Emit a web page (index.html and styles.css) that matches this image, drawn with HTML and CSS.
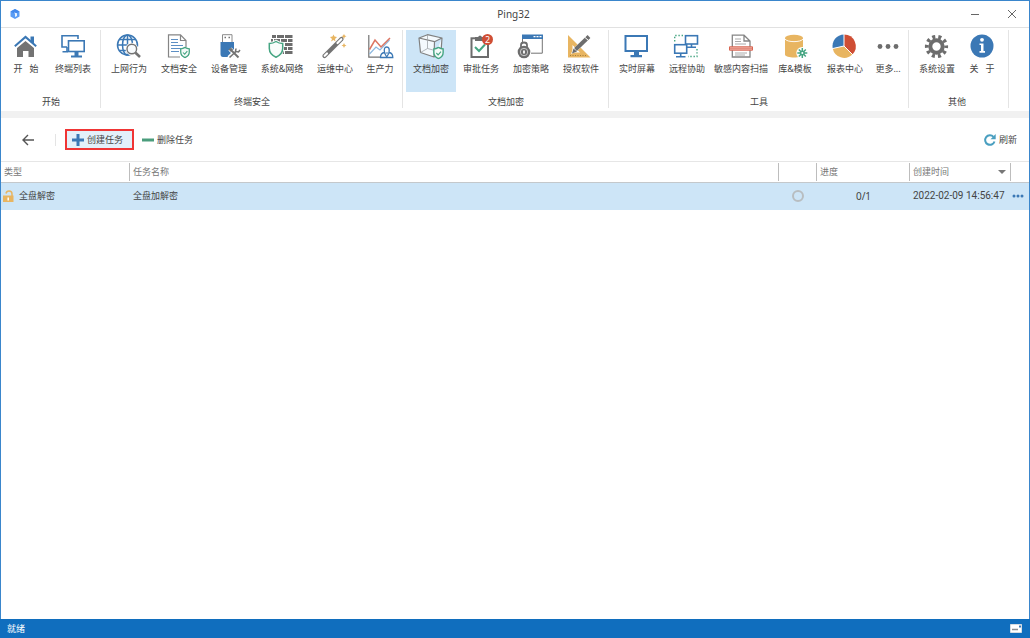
FILE: index.html
```html
<!DOCTYPE html>
<html lang="zh-CN">
<head>
<meta charset="utf-8">
<title>Ping32</title>
<link rel="stylesheet" href="styles.css">
</head>
<body>
<svg class="defs" aria-hidden="true">
  <symbol id="shield" viewBox="0 0 12 14"><path d="M6 1Q8.500 2.600 11 2.700V6.500Q11 11 6 13Q1 11 1 6.500V2.700Q3.500 2.600 6 1Z" fill="#f4faf8" stroke="#45a582" stroke-width="1.500"/><path d="M3.700 7L5.600 9L8.700 5.500" fill="none" stroke="#45a582" stroke-width="1.200"/></symbol>
</svg>
<div class="window">
  <header class="titlebar">
    <svg class="logo" viewBox="0 0 10 10"><path d="M5 0L9.500 2.500V7.500L5 10L.5 7.500V2.500Z" fill="#5b9df5"/><path d="M5 0L9.500 2.500L5 5L.5 2.500Z" fill="#4389ec"/><path d="M4 3.500L7 4.200V7L5 8V5Z" fill="#e8f3ff"/></svg>
    <h1 class="title">Ping32</h1>
    <div class="window-buttons">
      <button class="window-button" aria-label="最小化"><svg viewBox="0 0 10 10"><path d="M1 5.500H9"/></svg></button>
      <button class="window-button" aria-label="关闭"><svg viewBox="0 0 10 10"><path d="M1 1L9 9M9 1L1 9"/></svg></button>
    </div>
  </header>

  <nav class="ribbon">
    <section class="group">
      <div class="items">
        <button class="item item-small">
          <svg class="icon" viewBox="0 0 24 24"><path d="M3 14L11.500 7L20 14V23H14.500V17H9V23H3Z" fill="#737373"/><path d="M1 13L11.500 4L22 13" fill="none" stroke="#fff" stroke-width="3.400"/><path d="M16.500 2.500H20V11L16.500 8Z" fill="#3b78b5"/><path d="M.8 12.300L11.500 2.900L22.200 12.300" fill="none" stroke="#3b78b5" stroke-width="2"/></svg>
          <span>开&nbsp;&nbsp;&nbsp;始</span>
        </button>
        <button class="item">
          <svg class="icon" viewBox="0 0 24 24"><g fill="none" stroke="#3b78b5" stroke-width="1.600"><path d="M6 13H1V1.800H17V5"/><path d="M6 13V17.500M1.500 17.800H7"/><rect x="7.500" y="6.800" width="15.700" height="10.700"/><path d="M10 22.500H21" stroke-width="2"/></g><path d="M13.500 17H17.500V22H13.500Z" fill="#3b78b5"/></svg>
          <span>终端列表</span>
        </button>
      </div>
      <h2 class="group-name">开始</h2>
    </section>

    <section class="group">
      <div class="items">
        <button class="item">
          <svg class="icon" viewBox="0 0 24 24"><g fill="none" stroke="#3b78b5" stroke-width="1.500"><circle cx="10.500" cy="11" r="10"/><ellipse cx="10.500" cy="11" rx="5" ry="10"/><path d="M10.500 1V21M.5 11H20.500M2 5.500H19M2 16.500H19"/></g><path d="M18.500 19L23 23.500" stroke="#fff" stroke-width="4"/><circle cx="14.800" cy="15" r="6.300" fill="#fff"/><circle cx="14.800" cy="15" r="4.800" fill="#f8fbfd" stroke="#737373" stroke-width="1.400"/><path d="M18.500 18.700L23 23" stroke="#737373" stroke-width="2.600"/></svg>
          <span>上网行为</span>
        </button>
        <button class="item">
          <svg class="icon" viewBox="0 0 24 24"><path d="M13 23H1.500V.8H13.500L19 6.500V13M13.500 1V6.500H19" fill="none" stroke="#858585" stroke-width="1.200"/><path d="M4 5.500H11M4 8.500H11M4 11.500H16M4 14.500H14M4 17.500H12" stroke="#5d8fc4" stroke-width="1"/><use href="#shield" x="12.500" y="12.500" width="11" height="12"/></svg>
          <span>文档安全</span>
        </button>
        <button class="item">
          <svg class="icon" viewBox="0 0 24 24"><path d="M5.500 8V.7H15V8" fill="#fff" stroke="#8a8a8a"/><path d="M7.500 3.500H9M11.500 3.500H13" stroke="#737373" stroke-width="1.600"/><path d="M3.500 8H17V23H6Q3.500 23 3.500 20Z" fill="#3b78b5"/><path d="M13 15L22 24M21.500 15L12 24" stroke="#fff" stroke-width="4.500"/><path d="M14 16L21.500 23.500" stroke="#737373" stroke-width="2"/><path d="M12.500 23.500L19.500 17" stroke="#737373" stroke-width="1.600"/><path d="M11.500 15.500L14 13.800L16 15.500L14 18Z" fill="#737373"/><path d="M19 14.500L18.500 17.500L21.500 18L23 16" fill="none" stroke="#737373" stroke-width="1.500"/></svg>
          <span>设备管理</span>
        </button>
        <button class="item item-large">
          <svg class="icon" viewBox="0 0 24 24"><path d="M2 2.500H6M7 2.500H14M15 2.500H22.500M1 6.500H3M4 6.500H10M11 6.500H17M18 6.500H22.500M7 10.500H14M15 10.500H22.500M11 14.500H17M18 14.500H22.500M11 18.500H14M15 18.500H22.500" stroke="#6d6d6d" stroke-width="3"/><path d="M6 5.500Q9 8 14 8V16Q13 22 6 24.500Q-1 22-2 16V8Q3 8 6 5.500Z" fill="#fff"/><path d="M6 7.500Q9 9.500 12.700 9.500V14.500Q12.500 20.500 6 23.200Q-.5 20.500-.7 14.500V9.500Q3 9.500 6 7.500Z" fill="#f8fcfa" stroke="#45a582" stroke-width="1.500"/></svg>
          <span>系统&amp;网络</span>
        </button>
        <button class="item">
          <svg class="icon" viewBox="0 0 24 24"><path d="M1.500 22L18.500 5" stroke="#737373" stroke-width="4.200" stroke-linecap="round"/><path d="M1.700 21.800L4 19.500M14.500 9L18.300 5.200" stroke="#fff" stroke-width="2.200" stroke-linecap="round"/><g fill="#e8b561"><path d="M10.500 .5L11.500 2.500L14 3L12 5L12.500 7.500L10.500 6L8 7.500L9 5L7 3L9.500 2.500Z"/><path d="M21 0L21.800 1.500L23.500 2.200L21.800 3L21 5L20.100 3L18.500 2.200L20.100 1.500Z"/><path d="M21 9L21.800 10.800L23.500 11.500L21.800 12.200L21 14L20.200 12.200L18.500 11.500L20.200 10.800Z"/></g></svg>
          <span>运维中心</span>
        </button>
        <button class="item item-tiny">
          <svg class="icon" viewBox="0 0 24 24"><g fill="none" stroke-width="1.200"><path d="M.8 1V23.200H12" stroke="#737373"/><path d="M1.500 20L8 13L12 16L21.500 6" stroke="#8db8df"/><path d="M1.500 15.500L7 6L13 13L22 4" stroke="#dc7562" stroke-width="1.500"/></g><path d="M12.500 23.500Q12.500 19 16.500 18.500Q15.500 13 18.700 13Q22 13 21 18.500Q24.800 19 24.800 23.500Z" fill="#fff" stroke="#3b78b5" stroke-width="1.300"/><path d="M16.500 19L18.700 23L21 19M17.500 19H20" fill="none" stroke="#3b78b5" stroke-width="1.200"/></svg>
          <span>生产力</span>
        </button>
      </div>
      <h2 class="group-name">终端安全</h2>
    </section>

    <section class="group">
      <div class="items">
        <button class="item item-active" aria-current="page">
          <svg class="icon" viewBox="0 0 24 24"><path d="M0 4L8.500 .7L23 4L15.500 7.700ZM0 4L1.500 18.500L15 23L15.500 7.700M23 4L22 18L15 23" fill="#f4f9fd" stroke="#808080" stroke-width="1.200" stroke-linejoin="round"/><path d="M8.500 1V14.500L1.500 18.500M8.500 14.500L21.500 18" fill="none" stroke="#a0a5a8" stroke-width=".8"/><use href="#shield" x="13.500" y="12.500" width="12" height="13"/></svg>
          <span>文档加密</span>
        </button>
        <button class="item">
          <svg class="icon" viewBox="0 0 24 24"><rect x="2.500" y="4.300" width="16.500" height="18.700" fill="#fff" stroke="#6d6d6d" stroke-width="2"/><path d="M6 3H9Q11 0 13 3H16V7H6Z" fill="#6d6d6d"/><path d="M6 13L10 17L16 10.500" fill="none" stroke="#45a582" stroke-width="2"/><circle cx="18.500" cy="5.500" r="5.500" fill="#cf4e34"/><text x="18.500" y="9" class="badge-text">2</text></svg>
          <span>审批任务</span>
        </button>
        <button class="item">
          <svg class="icon" viewBox="0 0 24 24"><path d="M3.500 4V9M12 19.200H23.300V4" fill="none" stroke="#737373"/><path d="M3 .5H24V5H3Z" fill="#3b78b5"/><path d="M14.500 2.700H16.500M17.500 2.700H19.500M20.500 2.700H22.500" stroke="#fff" stroke-width="1.200"/><path d="M2 14V11Q2 8.500 5 8.500Q8 8.500 8 11V14" fill="none" stroke="#6d6d6d" stroke-width="1.800"/><circle cx="5" cy="18" r="6.300" fill="#6d6d6d"/><circle cx="5" cy="18" r="3.700" fill="none" stroke="#ddd" stroke-width=".8"/><path d="M5 16.500V19.500" stroke="#fff" stroke-width="1.800"/></svg>
          <span>加密策略</span>
        </button>
        <button class="item">
          <svg class="icon" viewBox="0 0 24 24"><path fill-rule="evenodd" d="M-1 1L21.500 23.500H-1ZM3.500 11V18.500H11Z" fill="#e8b561"/><path d="M1 21.500H17" stroke="#a57e3e" stroke-dasharray="1 1.500"/><path d="M2 20L4 15L19.500 -.2L23 3L7 18Z" fill="#fff"/><path d="M6.500 15.500L20 2.500" stroke="#6d6d6d" stroke-width="4"/><path d="M3 19.500L4.500 14.500L8 17.500Z" fill="#6d6d6d"/><path d="M16 3.500L19.500 6.500" stroke="#fff"/></svg>
          <span>授权软件</span>
        </button>
      </div>
      <h2 class="group-name">文档加密</h2>
    </section>

    <section class="group">
      <div class="items">
        <button class="item">
          <svg class="icon" viewBox="0 0 24 24"><rect x=".5" y="2" width="21.500" height="15" fill="#fff" stroke="#3b78b5" stroke-width="2"/><path d="M9 18H14V21H17V23.200H5.500V21H9Z" fill="#3b78b5"/></svg>
          <span>实时屏幕</span>
        </button>
        <button class="item">
          <svg class="icon" viewBox="0 0 24 24"><path d="M8 1.500H-.3V9M22 15V22.500H13" fill="none" stroke="#45a582" stroke-width="1.400" stroke-dasharray="1.400 1.800"/><g fill="#fff" stroke="#3b78b5" stroke-width="1.600"><rect x="10.500" y="1.700" width="12" height="8.300"/><path d="M16.500 10V13M12 13.200H21"/><rect x="-.3" y="10.700" width="12" height="8.500"/><path d="M5.700 19.500V22M1 22.700H10.500"/></g></svg>
          <span>远程协助</span>
        </button>
        <button class="item item-wide">
          <svg class="icon" viewBox="0 0 24 24"><path d="M3.300 1.200H15L21 7V23H3.300ZM15 1.200V7H21" fill="#fff" stroke="#858585" stroke-width="1.300"/><path d="M6 5H12M6 7.500H12M6 10H17M6 19H18M6 21H16" stroke="#aaa"/><path d="M.5 12.800H23.500V16.200H.5Z" fill="#efb1a5" stroke="#d86551"/><path d="M1 14.500H23" stroke="#e38c7d"/></svg>
          <span>敏感内容扫描</span>
        </button>
        <button class="item">
          <svg class="icon" viewBox="0 0 24 24"><path d="M2 4V20.500C2 24.500 20 24.500 20 20.500V4" fill="#e8b561"/><ellipse cx="11" cy="4" rx="9" ry="3.200" fill="#e8b561"/><path d="M2 5C4 8.500 18 8.500 20 5" fill="none" stroke="#fff" stroke-width=".9"/><circle cx="19.300" cy="19" r="6" fill="#fff"/><path d="M19.300 14V24M14.300 19H24.300M15.800 15.500L22.800 22.500M22.800 15.500L15.800 22.500" stroke="#45a582" stroke-width="1.500"/><circle cx="19.300" cy="19" r="2.500" fill="#45a582"/><circle cx="19.300" cy="19" r="1" fill="#fff"/></svg>
          <span>库&amp;模板</span>
        </button>
        <button class="item">
          <svg class="icon" viewBox="0 0 24 24"><path d="M11 12V.5A11.700 11.700 0 0 1 19.300 20.500Z" fill="#cf4e34"/><path d="M11 12L19.300 20.500A11.700 11.700 0 0 1-.3 14.500Z" fill="#e8b561"/><path d="M11 12L-.3 14.500A11.700 11.700 0 0 1 11 .5Z" fill="#3b78b5"/><path d="M11 0V12L20 21M11 12L-1 14.700" fill="none" stroke="#fff"/></svg>
          <span>报表中心</span>
        </button>
        <button class="item item-more">
          <svg class="icon" viewBox="0 0 24 24"><g fill="#6d6d6d"><circle cx="4" cy="12.500" r="2.400"/><circle cx="12" cy="12.500" r="2.400"/><circle cx="20" cy="12.500" r="2.400"/></g></svg>
          <span>更多...</span>
        </button>
      </div>
      <h2 class="group-name">工具</h2>
    </section>

    <section class="group group-last">
      <div class="items">
        <button class="item">
          <svg class="icon" viewBox="0 0 24 24"><circle cx="11.500" cy="12.500" r="9.700" fill="none" stroke="#6d6d6d" stroke-width="3.800" stroke-dasharray="3 3.095" stroke-dashoffset="1.500"/><circle cx="11.500" cy="12.500" r="6.200" fill="none" stroke="#6d6d6d" stroke-width="4"/></svg>
          <span>系统设置</span>
        </button>
        <button class="item item-tiny">
          <svg class="icon" viewBox="0 0 24 24"><circle cx="12" cy="12" r="11.500" fill="#3b78b5"/><circle cx="12" cy="5.800" r="1.900" fill="#fff"/><path d="M9.500 9.500H13.500V17H15V18.800H9.500V17H11V11H9.500Z" fill="#fff"/></svg>
          <span>关&nbsp;&nbsp;&nbsp;于</span>
        </button>
      </div>
      <h2 class="group-name">其他</h2>
    </section>
  </nav>

  <main class="content">
    <div class="toolbar">
      <button class="back" aria-label="返回"><svg viewBox="0 0 12 12"><path d="M12 6H1M6 1L1 6L6 11"/></svg></button>
      <button class="tool tool-create"><svg class="tool-icon" viewBox="0 0 12 12"><path d="M6 0V12M0 6H12" stroke="#3b78b5" stroke-width="3"/></svg>创建任务</button>
      <button class="tool"><svg class="tool-icon" viewBox="0 0 12 12"><path d="M0 6H12" stroke="#4a9d7c" stroke-width="3"/></svg>删除任务</button>
      <button class="tool tool-refresh"><svg class="tool-icon" viewBox="0 0 12 12"><path d="M10.500 7.500A4.800 4.800 0 1 1 9.500 2.800" fill="none" stroke="#4a9fc0" stroke-width="2"/><path d="M11.700 0V5.200H6.500Z" fill="#4a9fc0"/></svg>刷新</button>
    </div>

    <table class="tasks">
      <colgroup><col class="col-type"><col><col class="col-state"><col class="col-progress"><col class="col-created"><col class="col-menu"></colgroup>
      <thead>
        <tr>
          <th scope="col"><div class="head">类型</div></th>
          <th scope="col"><div class="head">任务名称</div></th>
          <th><div class="head"></div></th>
          <th scope="col"><div class="head">进度</div></th>
          <th scope="col" aria-sort="descending"><div class="head">创建时间<span class="sort"></span></div></th>
          <th></th>
        </tr>
      </thead>
      <tbody>
        <tr>
          <td class="type-cell"><div class="type"><svg class="lock" viewBox="0 0 11 12"><path d="M3 3.500Q3.500 1 6 1Q9 1 9 4V6" fill="none" stroke="#e8b561" stroke-width="1.500"/><path d="M0 5.500H10.500V12H0Z" fill="#e8b561"/><path d="M5.200 7.500V10.500" stroke="#fff" stroke-width="1.500"/></svg>全盘解密</div></td>
          <td>全盘加解密</td>
          <td class="state"><span class="ring"></span></td>
          <td class="progress">0/1</td>
          <td class="time">2022-02-09 14:56:47</td>
          <td class="menu-cell"><button class="row-menu" aria-label="更多操作"><svg viewBox="0 0 12 4"><g fill="#3b78b5"><circle cx="2" cy="2" r="1.500"/><circle cx="6" cy="2" r="1.500"/><circle cx="10" cy="2" r="1.500"/></g></svg></button></td>
        </tr>
      </tbody>
    </table>
  </main>

  <footer class="status">
    <span>就绪</span>
    <svg class="message" viewBox="0 0 12 9"><path d="M.5 .5H11.500V8.500H.5Z" fill="#fff" stroke="#d5dce2"/><path d="M2 5.500H8" stroke="#8a8f94" stroke-width="1.500"/><path d="M9 1.500H11V3.500H9Z" fill="#3b78b5"/></svg>
  </footer>
</div>
</body>
</html>
```
FILE: styles.css
```css
* {
  box-sizing: border-box;
}

body {
  margin: 0;
  color: #444;
  font: 9px/12px "Noto Sans", "Noto Sans CJK SC", sans-serif;
}

button {
  margin: 0;
  padding: 0;
  border: 0;
  background: none;
  color: inherit;
  font: inherit;
}

h1,
h2 {
  margin: 0;
  font: inherit;
}

svg {
  display: block;
  overflow: visible;
}

.defs {
  position: absolute;
  width: 0;
  height: 0;
}

.window {
  display: flex;
  flex-direction: column;
  min-height: 100vh;
  border: 1px solid #3a86cc;
  border-bottom: 0;
  background: #fff;
}

.titlebar {
  display: grid;
  grid-template-columns: 1fr auto 1fr;
  align-items: center;
  height: 27px;
  padding: 0 12px 0 9px;
  border-bottom: 1px solid #e1e1e1;
}

.logo {
  width: 10px;
  height: 10px;
}

.title {
  font-size: 10px;
}

.window-buttons {
  display: flex;
  justify-content: flex-end;
  gap: 27px;
}

.window-button svg {
  width: 10px;
  height: 10px;
  fill: none;
  stroke: #666;
}

.ribbon {
  display: flex;
  height: 83px;
  padding: 2px 0 3px;
}

.group {
  display: flex;
  flex-direction: column;
  justify-content: space-between;
  padding: 0 2px 0 3px;
  border-right: 1px solid #e4e4e4;
}

.group-last {
  padding-right: 6px;
}

.items {
  display: flex;
}

.item {
  display: flex;
  flex-direction: column;
  align-items: center;
  gap: 5px;
  width: 50px;
  height: 62px;
  padding-top: 4px;
  white-space: nowrap;
}

.item-tiny {
  width: 40px;
}

.item-small {
  width: 44px;
}

.item-more {
  width: 36px;
}

.item-large {
  width: 56px;
}

.item-wide {
  width: 58px;
}

.item-active {
  background: #cde5f7;
}

.icon {
  width: 24px;
  height: 24px;
}

.badge-text {
  fill: #fff;
  font-size: 9px;
  text-anchor: middle;
}

.group-name {
  text-align: center;
}

.content {
  flex: 1;
  border-top: 7px solid #f1f1f1;
}

.toolbar {
  display: flex;
  align-items: center;
  height: 43px;
  padding: 0 12px 0 21px;
}

.back {
  margin-right: 9px;
  padding-right: 21px;
  border-right: 1px solid #e4e4e4;
}

.back svg {
  width: 12px;
  height: 12px;
  fill: none;
  stroke: #555;
  stroke-width: 1.4;
}

.tool {
  display: flex;
  align-items: center;
  gap: 3px;
  height: 21px;
  padding: 0 8px;
}

.tool-create {
  padding: 0 9px 0 5px;
  border: 2px solid #f03535;
  background: #e3f0fa;
}

.tool-refresh {
  margin-left: auto;
  padding: 0;
}

.tool-icon {
  width: 12px;
  height: 12px;
}

.tasks {
  width: 100%;
  border-collapse: collapse;
  table-layout: fixed;
}

.col-type {
  width: 129px;
}

.col-state {
  width: 38px;
}

.col-progress {
  width: 93px;
}

.col-created {
  width: 101px;
}

.col-menu {
  width: 18px;
}

th,
td {
  padding: 0;
  font-weight: normal;
  text-align: left;
}

thead tr {
  height: 21px;
  border-top: 1px solid #e6e6e6;
  border-bottom: 1px solid #c4c8cb;
  color: #777;
}

.head {
  display: flex;
  align-items: center;
  justify-content: space-between;
  height: 18px;
  padding: 0 4px 0 3px;
  border-right: 1px solid #bdbdbd;
}

.sort {
  border: 4px solid transparent;
  border-top-color: #777;
  border-bottom: 0;
}

tbody tr {
  height: 27px;
  background: #cde5f7;
}

td {
  padding-left: 3px;
}

.type-cell {
  padding-left: 2px;
}

.type {
  display: flex;
  align-items: center;
  gap: 5px;
}

.lock {
  width: 11px;
  height: 12px;
}

.state {
  padding: 0;
}

.ring {
  display: block;
  width: 12px;
  height: 12px;
  margin: 0 auto;
  border: 2px solid #b8bdc0;
  border-radius: 50%;
}

.progress {
  padding: 0;
  font-size: 10px;
  text-align: center;
}

.time {
  font-family: Roboto, "Noto Sans", sans-serif;
  font-size: 10px;
  white-space: nowrap;
}

.menu-cell {
  padding: 0;
}

.row-menu {
  display: block;
  margin-left: 1px;
}

.row-menu svg {
  width: 12px;
  height: 4px;
}

.status {
  display: flex;
  align-items: center;
  justify-content: space-between;
  height: 19px;
  margin: 0 -1px;
  padding: 0 8px 0 7px;
  background: #106ebe;
  color: #fff;
}

.message {
  width: 12px;
  height: 9px;
}
```
